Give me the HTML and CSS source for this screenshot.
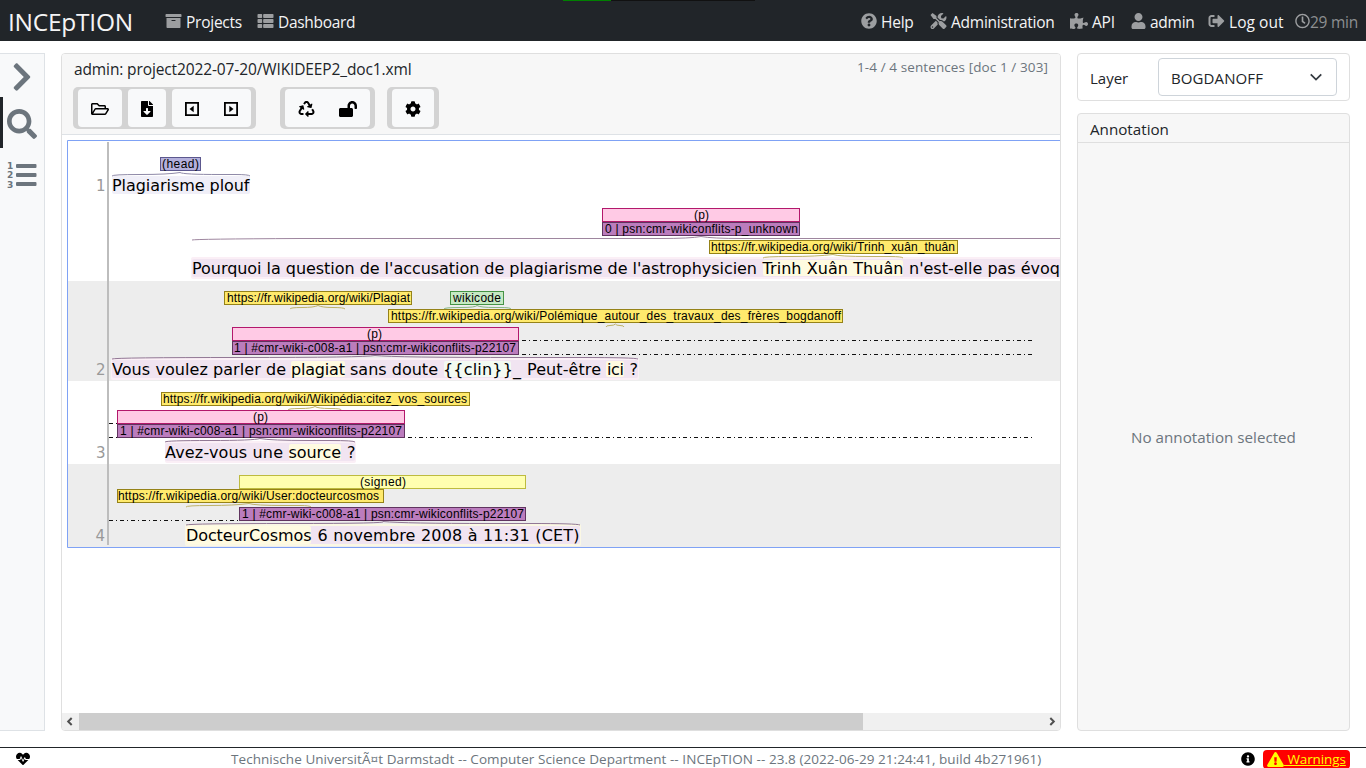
FILE: index.html
```html
<!DOCTYPE html>
<html lang="en">
<head>
<meta charset="utf-8">
<title>INCEpTION</title>
<link rel="stylesheet" href="styles.css">
</head>
<body>
<nav class="navbar">
  <i class="loader"></i>
  <span class="brand">INCEpTION</span>
  <a class="nav-item projects"><svg class="ic" viewBox="0 0 512 512"><path d="M32 448c0 17.7 14.3 32 32 32h384c17.7 0 32-14.3 32-32V160H32v288zm160-212c0-6.600 5.400-12 12-12h104c6.600 0 12 5.400 12 12v8c0 6.600-5.400 12-12 12H204c-6.600 0-12-5.400-12-12v-8zM480 32H32C14.300 32 0 46.300 0 64v48c0 8.800 7.200 16 16 16h480c8.800 0 16-7.200 16-16V64c0-17.700-14.300-32-32-32z"/></svg><span>Projects</span></a>
  <a class="nav-item dashboard"><svg class="ic" viewBox="0 0 512 512"><rect y="32" width="149" height="128" rx="24"/><rect y="192" width="149" height="128" rx="24"/><rect y="352" width="149" height="128" rx="24"/><rect x="181" y="32" width="331" height="128" rx="24"/><rect x="181" y="192" width="331" height="128" rx="24"/><rect x="181" y="352" width="331" height="128" rx="24"/></svg><span>Dashboard</span></a>
  <a class="nav-item help"><svg class="ic" viewBox="0 0 512 512"><path d="M504 256c0 136.997-111.043 248-248 248S8 392.997 8 256C8 119.083 119.043 8 256 8s248 111.083 248 248zM262.655 90c-54.497 0-89.255 22.957-116.549 63.758-3.536 5.286-2.353 12.415 2.715 16.258l34.699 26.310c5.205 3.947 12.621 3.008 16.665-2.122 17.864-22.658 30.113-35.797 57.303-35.797 20.429 0 45.698 13.148 45.698 32.958 0 14.976-12.363 22.667-32.534 33.976C247.128 238.528 216 254.941 216 296v4c0 6.627 5.373 12 12 12h56c6.627 0 12-5.373 12-12v-1.333c0-28.462 83.186-29.647 83.186-106.667 0-58.002-60.165-102-116.531-102zM256 338c-25.365 0-46 20.635-46 46 0 25.364 20.635 46 46 46s46-20.636 46-46c0-25.365-20.635-46-46-46z"/></svg><span>Help</span></a>
  <a class="nav-item administration"><svg class="ic" viewBox="0 0 512 512"><path d="M501.100 395.700L384 278.600c-23.100-23.100-57.600-27.600-85.400-13.900L192 158.100V96L64 0 0 64l96 128h62.100l106.600 106.600c-13.600 27.800-9.200 62.300 13.900 85.400l117.100 117.100c14.600 14.600 38.200 14.600 52.700 0l52.700-52.700c14.500-14.600 14.500-38.200 0-52.700zM331.700 225c28.300 0 54.900 11 74.900 31l19.400 19.400c15.800-6.900 30.800-16.500 43.800-29.500 37.100-37.100 49.700-89.300 37.900-136.700-2.200-9-13.500-12.100-20.100-5.500l-74.400 74.400-67.900-11.300L334 98.900l74.400-74.400c6.600-6.600 3.400-17.900-5.700-20.200-47.400-11.700-99.600.9-136.600 37.900-28.500 28.500-41.900 66.100-41.200 103.600l82.100 82.100c8.100-1.900 16.500-2.900 24.700-2.900zm-103.900 82l-56.700-56.700L18.700 402.800c-25 25-25 65.500 0 90.500s65.500 25 90.500 0l123.600-123.600c-7.600-19.900-9.900-41.600-5-62.700zM64 472c-13.200 0-24-10.800-24-24 0-13.300 10.700-24 24-24s24 10.700 24 24c0 13.200-10.700 24-24 24z"/></svg><span>Administration</span></a>
  <a class="nav-item api"><svg class="ic wide" viewBox="0 0 576 512"><path d="M519.442 288.651c-41.519 0-59.500 31.593-82.058 31.593C377.409 320.244 432 144 432 144s-196.288 80-196.288-3.297c0-35.827 36.288-46.250 36.288-85.985C272 19.216 243.885 0 210.539 0c-34.654 0-66.366 18.891-66.366 56.346 0 41.364 31.711 59.277 31.711 81.750C175.885 207.719 0 166.758 0 166.758v333.237s178.635 41.047 178.635-28.662c0-22.473-40-40.107-40-81.471 0-37.456 29.250-56.346 63.577-56.346 33.673 0 61.788 19.216 61.788 54.717 0 39.735-36.288 50.158-36.288 85.985 0 60.803 129.675 25.730 181.230 25.730 0 0-34.725-120.101 25.827-120.101 35.962 0 46.423 36.152 86.308 36.152C556.712 416 576 387.990 576 354.443c0-34.199-18.962-65.792-56.558-65.792z"/></svg><span>API</span></a>
  <a class="nav-item user"><svg class="ic slim" viewBox="0 0 448 512"><path d="M224 256c70.700 0 128-57.300 128-128S294.700 0 224 0 96 57.300 96 128s57.300 128 128 128zm89.600 32h-16.700c-22.200 10.200-46.900 16-72.900 16s-50.600-5.800-72.900-16h-16.700C60.200 288 0 348.200 0 422.400V464c0 26.500 21.500 48 48 48h352c26.500 0 48-21.500 48-48v-41.600c0-74.200-60.200-134.400-134.400-134.400z"/></svg><span>admin</span></a>
  <a class="nav-item logout"><svg class="ic" viewBox="0 0 512 512"><path d="M497 273L329 441c-15 15-41 4.500-41-17v-96H152c-13.300 0-24-10.700-24-24v-96c0-13.300 10.700-24 24-24h136V88c0-21.400 25.900-32 41-17l168 168c9.300 9.400 9.300 24.600 0 34zM192 436v-40c0-6.600-5.400-12-12-12H96c-17.700 0-32-14.300-32-32V160c0-17.700 14.300-32 32-32h84c6.600 0 12-5.400 12-12V76c0-6.600-5.400-12-12-12H96c-53 0-96 43-96 96v192c0 53 43 96 96 96h84c6.600 0 12-5.400 12-12z"/></svg><span>Log out</span></a>
  <span class="nav-item timer"><svg class="ic" viewBox="0 0 512 512"><path d="M256 8C119 8 8 119 8 256s111 248 248 248 248-111 248-248S393 8 256 8zm0 448c-110.500 0-200-89.500-200-200S145.500 56 256 56s200 89.500 200 200-89.500 200-200 200zm61.800-104.400l-84.900-61.700c-3.100-2.300-4.900-5.900-4.900-9.700V116c0-6.600 5.400-12 12-12h32c6.600 0 12 5.400 12 12v141.700l66.800 48.600c5.400 3.900 6.500 11.400 2.600 16.800L334.600 349c-3.900 5.300-11.400 6.500-16.800 2.600z"/></svg><span>29 min</span></span>
</nav>

<div class="page">
  <aside class="sidebar">
    <a class="side-tab"><svg width="20" height="32" viewBox="0 0 320 512"><path d="M285.476 272.971L91.132 467.314c-9.373 9.373-24.569 9.373-33.941 0l-22.667-22.667c-9.357-9.357-9.375-24.522-.04-33.901L188.505 256 34.484 101.255c-9.335-9.379-9.317-24.544.04-33.901l22.667-22.667c9.373-9.373 24.569-9.373 33.941 0L285.475 239.030c9.373 9.372 9.373 24.568.001 33.941z"/></svg></a>
    <a class="side-tab active"><svg width="30" height="30" viewBox="0 0 512 512"><path d="M505 442.700L405.300 343c-4.500-4.500-10.600-7-17-7H372c27.600-35.300 44-79.700 44-128C416 93.100 322.900 0 208 0S0 93.100 0 208s93.100 208 208 208c48.300 0 92.700-16.400 128-44v16.300c0 6.400 2.500 12.500 7 17l99.700 99.700c9.400 9.400 24.600 9.400 33.900 0l28.300-28.300c9.400-9.400 9.400-24.600.1-34zM208 336c-70.700 0-128-57.200-128-128 0-70.700 57.200-128 128-128 70.700 0 128 57.200 128 128 0 70.700-57.200 128-128 128z"/></svg></a>
    <a class="side-tab"><svg width="30" height="28" viewBox="0 0 30 28"><rect x="9" y="4" width="20.500" height="4" rx="1"/><rect x="9" y="13" width="20.500" height="4" rx="1"/><rect x="9" y="22" width="20.500" height="4" rx="1"/><g class="digits"><text x="0" y="9">1</text><text x="0" y="18.300">2</text><text x="0" y="27.500">3</text></g></svg></a>
  </aside>

  <main class="editor">
    <header class="editor-head">
      <div class="title-row"><span class="doc-title">admin: project2022-07-20/WIKIDEEP2_doc1.xml</span><span class="doc-pos">1-4 / 4 sentences [doc 1 / 303]</span></div>
      <div class="toolbar">
        <div class="group">
          <button class="btn open"><svg width="18" height="16" viewBox="0 0 576 512"><path d="M527.900 224H480v-48c0-26.500-21.500-48-48-48H272l-64-64H48C21.500 64 0 85.500 0 112v288c0 26.500 21.500 48 48 48h400c16.500 0 31.900-8.500 40.700-22.600l79.900-128c20-31.900-3-73.400-40.700-73.400zM48 118c0-3.300 2.700-6 6-6h134.100l64 64H426c3.300 0 6 2.700 6 6v42H152c-16.800 0-32.400 8.800-41.100 23.200L48 351.400zm400 282H72l77.200-128H528z"/></svg></button>
          <button class="btn export"><svg width="12" height="16" viewBox="0 0 384 512"><path d="M224 136V0H24C10.700 0 0 10.700 0 24v464c0 13.300 10.700 24 24 24h336c13.300 0 24-10.700 24-24V160H248c-13.200 0-24-10.800-24-24zm76.450 211.360l-96.420 95.700c-6.650 6.610-17.390 6.610-24.040 0l-96.420-95.700C73.420 337.290 80.540 320 94.820 320H160v-80c0-8.840 7.160-16 16-16h32c8.840 0 16 7.160 16 16v80h65.180c14.280 0 21.400 17.290 11.270 27.360zM377 105L279.100 7c-4.500-4.500-10.600-7-17-7H256v128h128v-6.100c0-6.300-2.500-12.400-7-16.900z"/></svg></button>
          <button class="btn pager"><svg width="14" height="16" viewBox="0 0 14 16"><path class="box" d="M.9 1.900h12.200v12.200H.9z"/><path d="M8.700 4.800v6.400L4.500 8z"/></svg><svg width="14" height="16" viewBox="0 0 14 16"><path class="box" d="M.9 1.900h12.200v12.200H.9z"/><path d="M5.300 4.800v6.400L9.500 8z"/></svg></button>
        </div>
        <div class="group second">
          <button class="btn state"><svg width="17" height="16" viewBox="0 0 512 512"><path d="M184.561 261.903c3.232 13.997-12.123 24.635-24.068 17.168l-40.736-25.455-50.867 81.402C55.606 356.273 70.960 384 96.012 384H148c6.627 0 12 5.373 12 12v40c0 6.627-5.373 12-12 12H96.115c-75.334 0-121.302-83.048-81.408-146.880l50.822-81.388-40.725-25.448c-12.081-7.547-8.966-25.961 4.879-29.158l110.237-25.450c8.611-1.988 17.201 3.381 19.189 11.990l25.452 110.237zm98.561-182.915l41.289 66.076-40.740 25.457c-12.051 7.528-9 25.953 4.879 29.158l110.237 25.450c8.672 1.999 17.215-3.438 19.189-11.990l25.450-110.237c3.197-13.844-11.990-24.719-24.068-17.168l-40.687 25.424-41.263-66.082c-37.521-60.033-125.209-60.171-162.816 0l-17.963 28.766c-3.510 5.620-1.800 13.021 3.820 16.533l33.919 21.195c5.620 3.512 13.024 1.803 16.536-3.817l17.961-28.743c12.712-20.341 41.973-19.676 54.257-.022zM497.288 301.120l-27.515-44.065c-3.511-5.623-10.916-7.334-16.538-3.821l-33.861 21.159c-5.620 3.512-7.330 10.915-3.818 16.536l27.564 44.112c13.257 21.211-2.057 48.960-27.136 48.960H320V336.020c0-14.213-17.242-21.383-27.313-11.313l-80 79.981c-6.249 6.248-6.249 16.379 0 22.627l80 79.989C302.689 517.308 320 510.300 320 495.989V448h95.880c75.274 0 121.335-82.997 81.408-146.880z"/></svg><svg width="18" height="16" viewBox="0 0 576 512"><path d="M423.500 0C339.500.3 272 69.500 272 153.500V224H48c-26.500 0-48 21.500-48 48v192c0 26.500 21.500 48 48 48h352c26.500 0 48-21.500 48-48V272c0-26.500-21.500-48-48-48h-48v-71.100c0-39.600 31.700-72.500 71.300-72.900 40-.4 72.700 32.100 72.700 72v80c0 13.300 10.700 24 24 24h32c13.300 0 24-10.700 24-24v-80C576 68 507.500-.3 423.500 0z"/></svg></button>
        </div>
        <div class="group third">
          <button class="btn prefs"><svg width="16" height="16" viewBox="0 0 512 512"><path d="M487.400 315.700l-42.600-24.600c4.300-23.200 4.300-47 0-70.200l42.600-24.600c4.900-2.800 7.100-8.600 5.500-14-11.100-35.600-30-67.800-54.700-94.600-3.800-4.100-10-5.100-14.800-2.300L380.800 110c-17.900-15.400-38.500-27.300-60.800-35.100V25.800c0-5.600-3.900-10.500-9.400-11.700-36.700-8.200-74.300-7.800-109.200 0-5.500 1.200-9.400 6.100-9.400 11.700V75c-22.200 7.900-42.800 19.800-60.800 35.100L88.700 85.500c-4.900-2.800-11-1.900-14.800 2.300-24.700 26.700-43.600 58.900-54.700 94.600-1.700 5.400.6 11.200 5.500 14L67.300 221c-4.300 23.200-4.300 47 0 70.200l-42.600 24.600c-4.900 2.800-7.100 8.600-5.500 14 11.100 35.600 30 67.800 54.700 94.600 3.800 4.100 10 5.100 14.800 2.300l42.600-24.600c17.900 15.400 38.500 27.300 60.800 35.100v49.200c0 5.600 3.900 10.500 9.400 11.700 36.700 8.200 74.300 7.800 109.200 0 5.500-1.200 9.400-6.100 9.400-11.700v-49.200c22.200-7.900 42.800-19.800 60.800-35.100l42.600 24.600c4.900 2.800 11 1.900 14.800-2.300 24.700-26.700 43.600-58.900 54.700-94.600 1.500-5.500-.7-11.300-5.600-14.100zM256 336c-44.100 0-80-35.900-80-80s35.900-80 80-80 80 35.900 80 80-35.900 80-80 80z"/></svg></button>
        </div>
      </div>
    </header>
    <div class="editor-body">
      <svg class="brat" width="993" height="408" viewBox="67 140 993 408">
        <path class="row" d="M68 281h992v100H68zM68 464h992v83H68z"/>
        <path class="frame" d="M1070 140.500H67.500v407H1070"/>
        <path class="gutter" d="M108 142v403"/>
        <g class="num"><text x="96" y="191">1</text><text x="96" y="375">2</text><text x="96" y="458">3</text><text x="95.500" y="541">4</text></g>

        <rect class="hl-head" x="112" y="176" width="138" height="18" rx="2"/>
        <rect class="hl-edge" x="191" y="257" width="880" height="22" rx="2"/><rect class="hl-p" x="192" y="259" width="878" height="18" rx="2"/><rect class="hl-link" x="763" y="260" width="140" height="16" rx="2"/>
        <rect class="hl-edge" x="111" y="358" width="528" height="22" rx="2"/><rect class="hl-p" x="112" y="360" width="526" height="18" rx="2"/><rect class="hl-link" x="291" y="361" width="54" height="16" rx="2"/><rect class="hl-code" x="444" y="361" width="67" height="16" rx="2"/><rect class="hl-link" x="606" y="361" width="18" height="16" rx="2"/>
        <rect class="hl-edge" x="165" y="441" width="191" height="22" rx="2"/><rect class="hl-p" x="165" y="443" width="190" height="18" rx="2"/><rect class="hl-link" x="289" y="444" width="52" height="16" rx="2"/>
        <rect class="hl-edge2" x="185" y="524" width="396" height="22" rx="2"/><rect class="hl-p" x="186" y="526" width="394" height="18" rx="2"/><rect class="hl-link" x="186" y="526" width="125" height="18" rx="2"/>

        <g class="words">
          <text x="112" y="191" textLength="137.500">Plagiarisme plouf</text>
          <text x="192" y="274" textLength="565">Pourquoi la question de l'accusation de plagiarisme de l'astrophysicien</text><text x="762.500" y="274" textLength="141">Trinh Xuân Thuân</text><text x="909" y="274" textLength="151">n'est-elle pas évoq</text>
          <text x="112" y="375" textLength="174">Vous voulez parler de</text><text x="291" y="375" textLength="54">plagiat</text><text x="350" y="375" textLength="88">sans doute</text><text x="443" y="375" textLength="78">{{clin}}_</text><text x="527" y="375" textLength="74">Peut-être</text><text x="607" y="375" textLength="17">ici</text><text x="629.500" y="375" textLength="8">?</text>
          <text x="165" y="458" textLength="118">Avez-vous une</text><text x="288.500" y="458" textLength="52.500">source</text><text x="347" y="458" textLength="8">?</text>
          <text x="186" y="541" textLength="125.500">DocteurCosmos</text><text x="317.500" y="541" textLength="262">6 novembre 2008 à 11:31 (CET)</text>
        </g>

        <g class="curve">
          <path stroke="#8f8aa8" d="M112 176Q112 174.500 140 174.500T180 172.500Q183 174.500 220 174.500H235Q249 174.500 250 176"/>
          <path stroke="#9e869f" d="M192 240Q195 239 300 238.500H660Q690 238.500 701 236.500Q712 238.500 742 238.500H1060"/>
          <path stroke="#beb268" d="M763 258Q763 256.500 790 256.500T833 254.500Q838 256.500 870 256.500H890Q902 256.500 903 258M290 309Q290 307.500 302 307.500T318 305.500Q322 307.500 333 307.500T345 309M606 327Q606 325.500 610 325.500T615.500 324Q616 325.500 620 325.500T624 327M288 410Q288 408.500 300 408.500T315 406.500Q318 408.500 330 408.500T341 410M186 507Q186 505.500 210 505.500T249 503.500Q254 505.500 285 505.500H300Q310 505.500 311 507"/>
          <path stroke="#86b686" d="M444 309Q444 307.500 460 307.500T477 305.500Q480 307.500 495 307.500H500Q511 307.500 511 309"/>
          <path stroke="#927895" d="M112 359Q115 357.500 240 357.500T375 355.500Q395 357.500 520 357.500H580Q635 357.500 638 359M165 442Q166 440.500 210 440.500T260 438.500Q270 440.500 310 440.500H330Q354 440.500 355 442M186 525Q190 523.500 290 523.500T383 521.500Q405 523.500 490 523.500H530Q577 523.500 580 525"/>
        </g>
        <path class="dash" d="M522 340.500H1034M522 354.500H1034M109 423.500H117M109 437.500H117M408 437.500H1034M109 520.500H239"/>

        <g class="spans">
          <rect fill="#b4b0dc" stroke="#5c588e" x="160.500" y="157.500" width="40" height="13"/><text x="162" y="168" textLength="37">(head)</text>
          <rect fill="#ffcae5" stroke="#b3186c" x="602.500" y="208.500" width="197" height="13"/><text x="694" y="219" textLength="15">(p)</text>
          <rect fill="#bb7cbd" stroke="#60345f" x="602.500" y="222.500" width="197" height="13"/><text x="605" y="233" textLength="193">0 | psn:cmr-wikiconflits-p_unknown</text>
          <rect fill="#ffea6d" stroke="#958218" x="709.500" y="240.500" width="248" height="13"/><text x="711" y="251" textLength="244">https://fr.wikipedia.org/wiki/Trinh_xuân_thuân</text>
          <rect fill="#ffea6d" stroke="#958218" x="224.500" y="291.500" width="187" height="13"/><text x="227" y="302" textLength="183">https://fr.wikipedia.org/wiki/Plagiat</text>
          <rect fill="#c6e9c3" stroke="#459345" x="450.500" y="291.500" width="53" height="13"/><text x="453" y="302" textLength="48">wikicode</text>
          <rect fill="#ffea6d" stroke="#958218" x="388.500" y="309.500" width="454" height="13"/><text x="391" y="320" textLength="450">https://fr.wikipedia.org/wiki/Polémique_autour_des_travaux_des_frères_bogdanoff</text>
          <rect fill="#ffcae5" stroke="#b3186c" x="232.500" y="327.500" width="286" height="13"/><text x="367" y="338" textLength="15">(p)</text>
          <rect fill="#bb7cbd" stroke="#60345f" x="232.500" y="341.500" width="286" height="13"/><text x="234" y="352" textLength="282">1 | #cmr-wiki-c008-a1 | psn:cmr-wikiconflits-p22107</text>
          <rect fill="#ffea6d" stroke="#958218" x="161.500" y="392.500" width="308" height="13"/><text x="163" y="403" textLength="304">https://fr.wikipedia.org/wiki/Wikipédia:citez_vos_sources</text>
          <rect fill="#ffcae5" stroke="#b3186c" x="117.500" y="410.500" width="287" height="13"/><text x="253" y="421" textLength="15">(p)</text>
          <rect fill="#bb7cbd" stroke="#60345f" x="117.500" y="424.500" width="287" height="13"/><text x="120" y="435" textLength="282">1 | #cmr-wiki-c008-a1 | psn:cmr-wikiconflits-p22107</text>
          <rect fill="#ffffb0" stroke="#bdbb3f" x="239.500" y="475.500" width="286" height="13"/><text x="360" y="486" textLength="46">(signed)</text>
          <rect fill="#ffea6d" stroke="#958218" x="117.500" y="489.500" width="266" height="13"/><text x="118" y="500" textLength="261">https://fr.wikipedia.org/wiki/User:docteurcosmos</text>
          <rect fill="#bb7cbd" stroke="#60345f" x="239.500" y="507.500" width="286" height="13"/><text x="242" y="518" textLength="282">1 | #cmr-wiki-c008-a1 | psn:cmr-wikiconflits-p22107</text>
        </g>
      </svg>
    </div>
    <div class="scrollbar"><svg width="17" height="17" viewBox="0 0 17 17"><path d="M9.700 5L6.200 8.500l3.500 3.500"/></svg><i class="thumb"></i><svg width="17" height="17" viewBox="0 0 17 17"><path d="M7.300 5l3.500 3.500L7.300 12"/></svg></div>
  </main>

  <aside class="details">
    <section class="layer-card"><label>Layer</label><div class="select"><span>BOGDANOFF</span><svg width="14" height="14" viewBox="0 0 16 16"><path d="M2 5l6 6 6-6"/></svg></div></section>
    <section class="annotation-card"><h2>Annotation</h2><div class="empty">No annotation selected</div></section>
  </aside>
</div>

<footer class="footer">
  <svg class="heart" width="14" height="14" viewBox="0 0 512 512"><path d="M320.200 243.800l-49.700 99.400c-6 12.100-23.400 11.700-28.900-.6l-56.900-126.300-30 71.700H60.600l182.500 186.500c7.100 7.300 18.600 7.300 25.700 0L451.400 288H342.300l-22.100-44.200zM473.700 73.900l-2.400-2.500c-51.500-52.600-135.800-52.600-187.400 0L256 100l-27.900-28.500c-51.500-52.700-135.900-52.700-187.400 0l-2.400 2.400C-10.400 123.700-12.500 203 31 256h102.400l35.900-86.200c5.400-12.900 23.600-13.200 29.400-.4l58.200 129.300 49-97.900c5.900-11.800 22.700-11.800 28.600 0l27.600 55.200H481c43.500-53 41.400-132.300-7.300-182.100z"/></svg>
  <span class="credits">Technische UniversitÃ¤t Darmstadt -- Computer Science Department -- INCEpTION -- 23.8 (2022-06-29 21:24:41, build 4b271961)</span>
  <svg class="info" width="14" height="14" viewBox="0 0 512 512"><path d="M256 8C119.043 8 8 119.083 8 256c0 136.997 111.043 248 248 248s248-111.003 248-248C504 119.083 392.957 8 256 8zm0 110c23.196 0 42 18.804 42 42s-18.804 42-42 42-42-18.804-42-42 18.804-42 42-42zm56 254c0 6.627-5.373 12-12 12h-88c-6.627 0-12-5.373-12-12v-24c0-6.627 5.373-12 12-12h12v-64h-12c-6.627 0-12-5.373-12-12v-24c0-6.627 5.373-12 12-12h64c6.627 0 12 5.373 12 12v100h12c6.627 0 12 5.373 12 12v24z"/></svg>
  <a class="warnings"><svg width="17" height="15" viewBox="0 0 576 512"><path d="M569.517 440.013C587.975 472.007 564.806 512 527.940 512H48.054c-36.937 0-59.999-40.055-41.577-71.987L246.423 23.985c18.467-32.009 64.720-31.951 83.154 0l239.940 416.028zM288 354c-25.405 0-46 20.595-46 46s20.595 46 46 46 46-20.595 46-46-20.595-46-46-46zm-43.673-165.346l7.418 136c.347 6.364 5.609 11.346 11.982 11.346h48.546c6.373 0 11.635-4.982 11.982-11.346l7.418-136c.375-6.874-5.098-12.654-11.982-12.654h-63.383c-6.884 0-12.356 5.780-11.981 12.654z"/></svg><u>&nbsp;Warnings</u></a>
</footer>
</body>
</html>
```
FILE: styles.css
```css
* { box-sizing: border-box; }
body { margin: 0; height: 768px; overflow: hidden; display: flex; flex-direction: column; background: #fff; color: #212529; font: 15.5px/24px "Open Sans", "Noto Sans", sans-serif; }
svg { display: block; flex: none; }

.navbar { position: relative; height: 41px; flex: none; display: flex; align-items: center; background: #212529; color: #f4f4f5; white-space: nowrap; }
.loader { position: absolute; left: 563px; top: 0; width: 48px; height: 1px; background: #008000; box-shadow: 48px 0 #111, 96px 0 #111, 144px 0 #111; }
.brand { width: 165px; padding-left: 8px; font-size: 24.5px; letter-spacing: -.25px; padding-top: 2px; }
.nav-item { display: flex; align-items: center; gap: 4px; flex: none; letter-spacing: -.25px; }
.ic { width: 17px; height: 16px; fill: #9c9ea0; }
.help .ic { width: 16px; }
.wide { width: 18px; }
.ic.wide { width: 18px; }
.ic.slim { width: 15px; }
.nav-item span { padding-top: 2px; }
.projects { width: 92px; }
.dashboard { width: 604px; letter-spacing: -.3px; }
.help { width: 69px; }
.administration { width: 140px; }
.api { width: 61px; }
.user { width: 77px; }
.logout { width: 87px; letter-spacing: .05px; }
.timer { gap: 0; color: #8d8f91; }
.timer .ic { width: 15px; }

.page { height: 678px; margin-top: 12px; flex: none; display: flex; }
.sidebar { width: 45px; border: solid #dee2e6; border-width: 1px 1px 1px 0; background: #f8f9fa; display: flex; flex-direction: column; margin-right: 16px; }
.side-tab { height: 51px; display: flex; align-items: center; justify-content: center; padding-right: 1px; fill: #6c757d; }
.side-tab:first-child { height: 43px; padding-top: 3px; }
.side-tab.active { border-left: 3px solid #212529; padding-right: 4px; padding-top: 2px; }
.digits { font: bold 9px "DejaVu Sans", sans-serif; }

.editor { width: 1000px; border: 1px solid #dfdfdf; border-radius: 4px; display: flex; flex-direction: column; margin-right: 16px; overflow: hidden; }
.editor-head { height: 81px; background: #f7f7f7; border-bottom: 1px solid #dee2e6; padding: 4px 12px 0 11px; }
.title-row { display: flex; justify-content: space-between; height: 29px; white-space: nowrap; }
.doc-title { font-size: 15.5px; line-height: 22px; letter-spacing: -.12px; padding-left: 1px; }
.doc-pos { font-size: 13.5px; line-height: 19px; letter-spacing: .1px; color: #6c757d; }
.toolbar { display: flex; }
.group { height: 42px; display: flex; gap: 6px; padding: 2px 5px; background: #d3d3d3; border-radius: 5px; }
.second { margin-left: 24px; }
.third { margin-left: 12px; }
.btn { height: 38px; padding: 0; border: 0; border-radius: 4px; background: #f8f9fa; display: flex; align-items: center; justify-content: center; padding-top: 1px; }
.open { width: 44px; }
.export { width: 38px; }
.pager { width: 79px; gap: 25px; }
.state { width: 85px; gap: 24px; }
.prefs { width: 42px; }
.box { fill: none; stroke: #000; stroke-width: 1.8; }

.editor-body { flex: 1; padding: 5px 0 0 5px; overflow: hidden; }
.row { fill: #ededed; }
.frame { fill: none; stroke: #7fa2f5; }
.gutter { stroke: #bdbdbd; stroke-width: 2; }
.num, .words { font: 16px "DejaVu Sans", sans-serif; }
.num { fill: #999; font-size: 15px; }
.hl-head { fill: #f0eff8; }
.hl-edge { fill: #fbeff6; }
.hl-edge2 { fill: #fbf8e4; }
.hl-p { fill: #f1e4f1; }
.hl-link { fill: #fffbe1; }
.hl-code { fill: #f3faf2; }
.curve { fill: none; }
.dash { fill: none; stroke: #111; stroke-dasharray: 4 3 1 3; }
.spans { font: 12px "Liberation Sans", Arial, sans-serif; }
.spans text { fill: #000; }
.scrollbar { height: 17px; display: flex; background: #f0f0f0; }
.scrollbar path { fill: none; stroke: #505050; stroke-width: 2; }
.thumb { width: 784px; background: #cdcdcd; margin-right: 180px; }

.details { width: 273px; display: flex; flex-direction: column; gap: 12px; }
.layer-card { height: 48px; border: 1px solid #dfdfdf; border-radius: 4px; display: flex; align-items: center; padding: 0 12px; }
.layer-card label { width: 68px; font-size: 15px; padding-top: 2px; }
.select { width: 179px; height: 38px; border: 1px solid #ced4da; border-radius: 4px; display: flex; align-items: center; justify-content: space-between; padding: 0 13px 0 12px; }
.select span { font-size: 15px; letter-spacing: .1px; padding-top: 2px; }
.select path { fill: none; stroke: #343a40; stroke-width: 2; }
.annotation-card { flex: 1; border: 1px solid #dfdfdf; border-radius: 4px; background: #f7f7f7; display: flex; flex-direction: column; }
.annotation-card h2 { margin: 0; height: 29px; padding: 3px 12px; border-bottom: 1px solid #dfdfdf; font-size: 15.2px; font-weight: 400; }
.empty { flex: 1; display: flex; align-items: center; justify-content: center; color: #6c757d; font-size: 15.2px; padding-top: 1px; }

.footer { height: 21px; margin-top: 16px; flex: none; border-top: 1px solid #212529; display: flex; align-items: center; white-space: nowrap; font-size: 13.5px; }
.heart { margin-left: 16px; margin-top: 2px; }
.info { margin-top: 2px; }
.credits { margin-left: 201px; width: 1010px; color: #6c757d; padding-top: 2px; letter-spacing: .06px; }
.warnings { width: 87px; height: 19px; margin-left: 8px; margin-top: 2px; border-radius: 4px; background: #f00; color: #ff0; fill: #ff0; display: flex; align-items: center; padding-left: 4px; letter-spacing: -.1px; }
```
